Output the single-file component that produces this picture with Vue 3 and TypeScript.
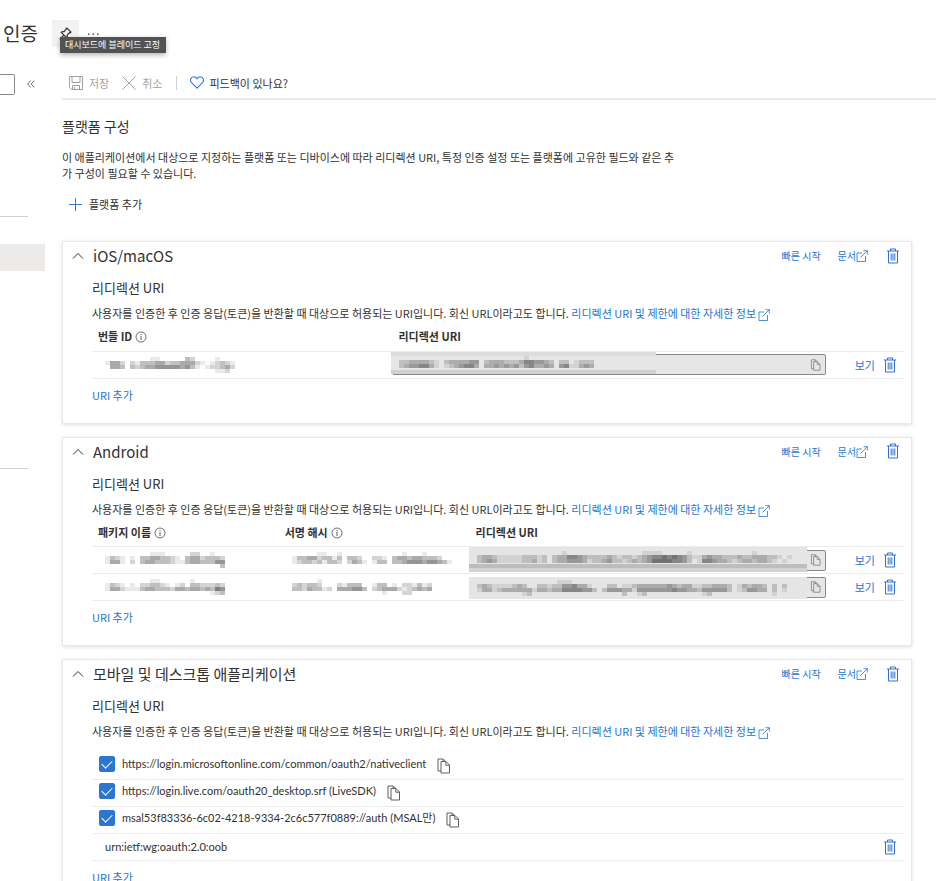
<script setup lang="ts">
import { ref } from 'vue'

interface Field {
  cells: string[]
  kind: 'short' | 'banded' | 'plain'
}
interface Row {
  names: string[][]
  field: Field
}
interface Column {
  label: string
  info: boolean
  width: string
}
interface Platform {
  title: string
  columns: Column[]
  rows: Row[]
}

/* Redacted values: every digit is the darkness of one mosaic cell. */
const platforms: Platform[] = [
  {
    title: 'iOS/macOS',
    columns: [
      { label: '번들 ID', info: true, width: '37%' },
      { label: '리디렉션 URI', info: false, width: '53.4%' },
    ],
    rows: [
      {
        names: [
          [
            '00000000011000003200001000',
            '14420213334423344421012321',
            '04430323445555545310122342',
            '00000000000000000000001120',
          ],
        ],
        field: {
          kind: 'short',
          cells: [
            '000000000000000000000000010000000000000',
            '223333210233334402333222355443202201222',
            '234455310123455303343434245334304511343',
            '000000000000000000000000000000000000000',
          ],
        },
      },
    ],
  },
  {
    title: 'Android',
    columns: [
      { label: '패키지 이름', info: true, width: '23%' },
      { label: '서명 해시', info: true, width: '23.5%' },
      { label: '리디렉션 URI', info: false, width: '43.9%' },
    ],
    rows: [
      {
        names: [
          [
            '0000000001110000022001000',
            '1321010334433210344233320',
            '1441020344333211344333550',
            '0000000000000000000000030',
          ],
          [
            '00000110010000000000001000100000',
            '13344233130332002210344344333200',
            '12332313320243101330334555455431',
            '00000000000000000000000000000000',
          ],
        ],
        field: {
          kind: 'banded',
          cells: [
            '000000000000000001000000000000000111100000100000000000010000000',
            '233211111222120233554322223212212345565654211343322232233322101',
            '234311111223120233444312234221232346666554201554332123323321010',
            '000000000000000000000000000000000000000000000000000000000000000',
          ],
        },
      },
      {
        names: [
          [
            '0000000001100000010000000',
            '1321010223321012033222320',
            '1442111344333244344343650',
            '0000000000000000000001230',
          ],
          [
            '00000100000000000000000000000000',
            '23233200021333001330102213120000',
            '33243312044455302344421234340000',
            '00000000000000000010002200000000',
          ],
        ],
        field: {
          kind: 'plain',
          cells: [
            '000000000000000011100000000000000000000000000000000000000000000',
            '232111123200221224453310002201123333334323311223332013233202020',
            '133123333331332335555442024443314444444544332444442012443302010',
            '000000000120000000000000000002001200000000000120000000000001000',
          ],
        },
      },
    ],
  },
]

const suggested = ref([
  { id: 'native', uri: 'https://login.microsoftonline.com/common/oauth2/nativeclient', checked: true },
  { id: 'live', uri: 'https://login.live.com/oauth20_desktop.srf (LiveSDK)', checked: true },
  { id: 'msal', uri: 'msal53f83336-6c02-4218-9334-2c6c577f0889://auth (MSAL만)', checked: true },
])

const cards = [...platforms.map((p) => p.title), '모바일 및 데스크톱 애플리케이션']

function mosaic(lines: string[]) {
  return lines.flatMap((line, y) =>
    [...line].map((c, x) => ({ x: x * 5, y: y * 4, o: Number(c) / 12 })).filter((c) => c.o > 0),
  )
}
</script>

<template>
  <svg class="sprite" aria-hidden="true">
    <symbol id="i-trash" viewBox="0 0 14 16">
      <path d="M1 3h12M4.5 3V1h5v2M2.5 3v12h9V3M5.2 5.5v7M7 5.5v7M8.8 5.5v7" fill="none" stroke="currentColor" />
    </symbol>
    <symbol id="i-copy" viewBox="0 0 14 16">
      <path d="M4.5 13H1.5V1h5.2l2 2M4.5 3.5h5l3.5 3.5v8h-8.500zM9.300 3.700v3.500h3.500M6.700 1v2.500" fill="none" stroke="currentColor" />
    </symbol>
    <symbol id="i-open" viewBox="0 0 12 12">
      <path d="M6 3H1v8.5h8.500V6M4.500 7.500L11.200.8M7.500.7h3.800v3.800" fill="none" stroke="currentColor" stroke-width=".8" />
    </symbol>
    <symbol id="i-info" viewBox="0 0 12 12">
      <circle cx="6" cy="6" r="5" fill="none" stroke="currentColor" stroke-width=".7" />
      <path d="M6 5v4M6 3v1" stroke="currentColor" stroke-width=".8" />
    </symbol>
    <symbol id="i-chevron" viewBox="0 0 12 8">
      <path d="M1 6.500l5-5 5 5" fill="none" stroke="currentColor" />
    </symbol>
    <symbol id="i-save" viewBox="0 0 14 14">
      <path d="M.5.5h13v13H2.500l-2-2zM3 .5v6h8v-6M3.500 13.500V9.500h7v4M5.500 11v2.500" fill="none" stroke="currentColor" />
    </symbol>
    <symbol id="i-cancel" viewBox="0 0 14 14">
      <path d="M.5.5l13 13M13.500.5l-13 13" stroke="currentColor" />
    </symbol>
    <symbol id="i-heart" viewBox="0 0 14 13">
      <path d="M7 12.200L1.500 6.700C-.4 4.600.5.800 3.900.700 5.500.700 6.400 1.600 7 2.700 7.600 1.600 8.500.7 10.100.7c3.400.1 4.300 3.900 2.400 6z" fill="none" stroke="currentColor" stroke-width="1.100" />
    </symbol>
    <symbol id="i-plus" viewBox="0 0 13 13">
      <path d="M6.500 0v13M0 6.500h13" stroke="currentColor" />
    </symbol>
    <symbol id="i-more" viewBox="0 0 11 2">
      <path d="M0 .5h1.500v1.200H0zM4.500.5H6v1.200H4.500zM9 .5h1.500v1.200H9z" fill="currentColor" />
    </symbol>
    <symbol id="i-collapse" viewBox="0 0 8 8">
      <path d="M3.700.5L.7 4l3 3.500M7.200.5L4.200 4l3 3.500" fill="none" stroke="currentColor" stroke-width=".9" />
    </symbol>
    <symbol id="i-pin" viewBox="0 0 12 12">
      <path d="M7.300 1l3.700 3.700-.8.8-.6-.2-2 2c.3 1 .1 1.800-.6 2.500L2 4.900c.7-.7 1.600-.8 2.500-.5l2-2-.1-.6zM4.400 7.500L.6 11.400" fill="none" stroke="currentColor" stroke-width="1.100" />
    </symbol>
  </svg>

  <div class="page">
    <header class="top">
      <h1>인증</h1>
      <div class="pin-wrap">
        <button class="pin" aria-label="대시보드에 블레이드 고정"><svg width="13" height="13"><use href="#i-pin" /></svg></button>
        <div class="tooltip" role="tooltip">대시보드에 블레이드 고정</div>
      </div>
      <button class="more" aria-label="기타"><svg width="11" height="2"><use href="#i-more" /></svg></button>
    </header>

    <div class="body">
      <aside class="side">
        <div class="search-row">
          <input class="search" type="text" aria-label="검색" />
          <button class="collapse" aria-label="메뉴 접기"><svg width="8" height="8"><use href="#i-collapse" /></svg></button>
        </div>
        <hr class="rule" />
        <a class="current" href="#auth" aria-label="인증"></a>
        <hr class="rule lower" />
      </aside>

      <main class="main">
        <div class="toolbar">
          <button class="tool" disabled><svg width="14" height="14"><use href="#i-save" /></svg>저장</button>
          <button class="tool" disabled><svg width="14" height="14"><use href="#i-cancel" /></svg>취소</button>
          <span class="bar"></span>
          <button class="tool feedback"><svg width="14" height="13"><use href="#i-heart" /></svg>피드백이 있나요?</button>
        </div>

        <div class="content">
          <h2>플랫폼 구성</h2>
          <p class="intro">
            이 애플리케이션에서 대상으로 지정하는 플랫폼 또는 디바이스에 따라 리디렉션 URI, 특정 인증 설정 또는 플랫폼에 고유한 필드와 같은 추가 구성이 필요할 수 있습니다.
          </p>
          <button class="add-platform"><svg width="13" height="13"><use href="#i-plus" /></svg>플랫폼 추가</button>

          <section v-for="(title, i) in cards" :key="title" class="card">
            <div class="card-head">
              <button class="toggle" :aria-label="title"><svg width="12" height="8"><use href="#i-chevron" /></svg></button>
              <h3>{{ title }}</h3>
              <a class="quick" href="#quickstart">빠른 시작</a>
              <a class="docs" href="#docs">문서<svg width="12" height="12"><use href="#i-open" /></svg></a>
              <button class="trash" aria-label="플랫폼 삭제"><svg width="14" height="16"><use href="#i-trash" /></svg></button>
            </div>
            <div class="card-body">
              <h4>리디렉션 URI</h4>
              <p class="desc">
                사용자를 인증한 후 인증 응답(토큰)을 반환할 때 대상으로 허용되는 URI입니다. 회신 URL이라고도 합니다.
                <a href="#redirect">리디렉션 URI 및 제한에 대한 자세한 정보<svg width="12" height="12"><use href="#i-open" /></svg></a>
              </p>

              <table v-if="platforms[i]">
                <colgroup>
                  <col v-for="c in platforms[i].columns" :key="c.label" :style="{ width: c.width }" />
                  <col />
                </colgroup>
                <thead>
                  <tr>
                    <th v-for="c in platforms[i].columns" :key="c.label" scope="col">
                      {{ c.label }}<svg v-if="c.info" width="12" height="12"><use href="#i-info" /></svg>
                    </th>
                    <td></td>
                  </tr>
                </thead>
                <tbody>
                  <tr v-for="(row, r) in platforms[i].rows" :key="r">
                    <td v-for="(name, n) in row.names" :key="n" class="name">
                      <svg :width="name[0].length * 5" height="16" shape-rendering="crispEdges">
                        <rect v-for="(c, k) in mosaic(name)" :key="k" :x="c.x" :y="c.y" width="5" height="4" :fill-opacity="c.o" />
                      </svg>
                    </td>
                    <td>
                      <div class="field" :class="row.field.kind">
                        <input type="text" readonly aria-label="리디렉션 URI" />
                        <div class="mask">
                          <svg :width="row.field.cells[0].length * 5" height="16" shape-rendering="crispEdges">
                            <rect v-for="(c, k) in mosaic(row.field.cells)" :key="k" :x="c.x" :y="c.y" width="5" height="4" :fill-opacity="c.o" />
                          </svg>
                        </div>
                        <button class="copy" aria-label="복사"><svg width="11" height="12"><use href="#i-copy" /></svg></button>
                      </div>
                    </td>
                    <td>
                      <div class="actions">
                        <a href="#view">보기</a>
                        <button class="trash" aria-label="삭제"><svg width="14" height="16"><use href="#i-trash" /></svg></button>
                      </div>
                    </td>
                  </tr>
                </tbody>
              </table>

              <ul v-else class="uris">
                <li v-for="s in suggested" :key="s.id" class="suggested">
                  <input :id="s.id" v-model="s.checked" type="checkbox" />
                  <label :for="s.id">{{ s.uri }}</label>
                  <button class="copy-uri" aria-label="복사"><svg width="15" height="16"><use href="#i-copy" /></svg></button>
                </li>
                <li class="custom">
                  <span>urn:ietf:wg:oauth:2.0:oob</span>
                  <button class="trash" aria-label="삭제"><svg width="14" height="16"><use href="#i-trash" /></svg></button>
                </li>
              </ul>
              <a class="add-uri" href="#add">URI 추가</a>
            </div>
          </section>
        </div>
      </main>
    </div>
  </div>
</template>

<style>
html {
  background: #fff;
  overflow-x: hidden;
  scrollbar-width: none;
}
</style>

<style scoped>
.sprite {
  position: absolute;
  width: 0;
  height: 0;
}
.page {
  font-family: 'Noto Sans CJK KR', 'Noto Sans', sans-serif;
  font-size: 11px;
  line-height: 16px;
  color: #323130;
}
.page * {
  box-sizing: border-box;
}
button {
  display: flex;
  align-items: center;
  border: 0;
  padding: 0;
  background: none;
  font: inherit;
  color: inherit;
}
a {
  color: #1f74cc;
  text-decoration: none;
}
h1,
h2,
h3,
h4,
p,
ul {
  margin: 0;
  padding: 0;
  font-weight: 400;
}
svg {
  display: block;
  flex: none;
}
.top {
  display: flex;
  align-items: center;
  height: 67px;
  padding-left: 3px;
}
h1 {
  width: 49px;
  padding-bottom: 2px;
  font-size: 19px;
  line-height: 28px;
}
.pin-wrap {
  position: relative;
}
.pin {
  width: 27px;
  height: 27px;
  justify-content: center;
  background: #f3f2f1;
}
.tooltip {
  position: absolute;
  left: 8px;
  top: 17px;
  padding: 0 6px 0 5px;
  background: #505254;
  color: #fff;
  font-size: 9px;
  line-height: 16px;
  white-space: nowrap;
  box-shadow: 0 2px 5px rgba(0, 0, 0, 0.3);
}
.more {
  margin-left: 9px;
}
.body {
  display: flex;
}
.side {
  width: 62px;
  flex: none;
}
.search-row {
  display: flex;
  align-items: center;
  gap: 12px;
  height: 34px;
}
.search {
  width: 15px;
  height: 21px;
  border: 1px solid #8a8886;
  border-left: 0;
  border-radius: 0 2px 2px 0;
}
.collapse {
  color: #605e5c;
}
.rule {
  width: 28px;
  margin: 115px 0 27px;
  border: 0;
  border-top: 1px solid #d2d0ce;
}
.current {
  display: block;
  width: 45px;
  height: 27px;
  background: #edebe9;
}
.rule.lower {
  margin: 197px 0 0;
}
.main {
  flex: 1;
  min-width: 0;
}
.toolbar {
  display: flex;
  align-items: center;
  gap: 13px;
  height: 33px;
  padding-left: 7px;
  border-bottom: 2px solid #eaeaea;
}
.tool {
  gap: 6px;
}
.tool:disabled {
  color: #a19f9d;
}
.bar {
  width: 1px;
  height: 14px;
  background: #d2d0ce;
}
.feedback svg,
.add-platform svg {
  color: #2f7cd8;
}
.content {
  padding: 15px 24px 0 0;
}
h2 {
  font-size: 14px;
  line-height: 22px;
}
.intro {
  max-width: 616px;
  margin-top: 12px;
  word-break: break-all;
}
.add-platform {
  gap: 7px;
  height: 22px;
  margin: 12px 0 26px 7px;
}
.card {
  margin-bottom: 13px;
  padding-bottom: 11px;
  border: 1px solid #e8e8e8;
  box-shadow: 0 1px 4px rgba(0, 0, 0, 0.13);
}
.card-head {
  display: flex;
  align-items: center;
  height: 30px;
  padding: 0 11px 2px 9px;
}
.card-head .trash {
  padding-bottom: 1px;
}
.toggle {
  width: 21px;
}
h3 {
  flex: 1;
  font-size: 15px;
  line-height: 20px;
}
.quick,
.docs {
  font-size: 10px;
}
.docs {
  display: flex;
  align-items: center;
  margin: 0 18px 0 17px;
}
.trash {
  color: #2f6fdc;
}
.card-body {
  padding: 0 7px 0 29px;
}
h4 {
  font-size: 13px;
  line-height: 32px;
}
.desc {
  padding-bottom: 2px;
  line-height: 18px;
}
.desc svg {
  display: inline-block;
  margin-left: 2px;
  vertical-align: -3px;
}
table {
  width: 100%;
  table-layout: fixed;
  border-collapse: collapse;
}
th,
td {
  padding: 0;
  text-align: left;
}
th {
  height: 27px;
  padding: 0 0 2px 6px;
  font-weight: 600;
}
th svg {
  display: inline-block;
  margin-left: 3px;
  vertical-align: -2px;
}
tbody td {
  height: 27px;
  border-top: 1px solid #ececec;
  border-bottom: 1px solid #ececec;
}
.name {
  padding-left: 13px;
}
.field {
  position: relative;
  display: flex;
  align-items: center;
}
.field input {
  width: 100%;
  height: 21px;
  border: 1px solid #8a8886;
  border-radius: 2px;
  background: #e6e6e6;
}
.mask {
  position: absolute;
  left: -1px;
  top: -2px;
  display: flex;
  align-items: center;
  width: 61%;
  height: 22px;
  padding: 2px 0 0 8px;
  overflow: hidden;
  background: linear-gradient(#dcdcdc 4px, #e6e6e6 4px 18px, #d0d0d0 18px);
}
.banded .mask {
  top: -3px;
  width: 95%;
  height: 25px;
  padding-top: 0;
  background: linear-gradient(#e5e5e5 17px, #bdbdbd 17px 21px, #d3d3d3 21px);
}
.plain .mask {
  top: 0;
  width: 95%;
  padding-top: 0;
  background: #e5e5e5;
}
.copy {
  position: absolute;
  right: 5px;
  color: #797775;
}
.actions {
  display: flex;
  align-items: center;
  justify-content: flex-end;
  gap: 8px;
  padding-right: 7px;
}
.uris {
  list-style: none;
  font-family: Lato, 'Noto Sans CJK KR', sans-serif;
}
.uris li {
  display: flex;
  align-items: center;
  height: 27px;
  padding: 0 7px;
  border-bottom: 1px solid #ececec;
}
.uris .suggested {
  padding-bottom: 4px;
}
.uris .suggested:first-child {
  height: 38px;
  padding-top: 11px;
}
.uris .custom {
  justify-content: space-between;
  padding-left: 13px;
}
.uris input {
  width: 16px;
  height: 16px;
  margin: 0 7px 0 0;
  appearance: none;
  border: 1px solid #2b76d0;
  border-radius: 2px;
}
.uris input:checked {
  background: #2b76d0;
}
.uris input:checked::after {
  content: '';
  display: block;
  width: 9px;
  height: 5px;
  margin: 3px 0 0 2px;
  border: solid #fff;
  border-width: 0 0 1px 1px;
  transform: rotate(-45deg);
}
.copy-uri {
  margin-left: 10px;
  padding-top: 4px;
  color: #605e5c;
}
.add-uri {
  display: block;
  line-height: 33px;
}
</style>
